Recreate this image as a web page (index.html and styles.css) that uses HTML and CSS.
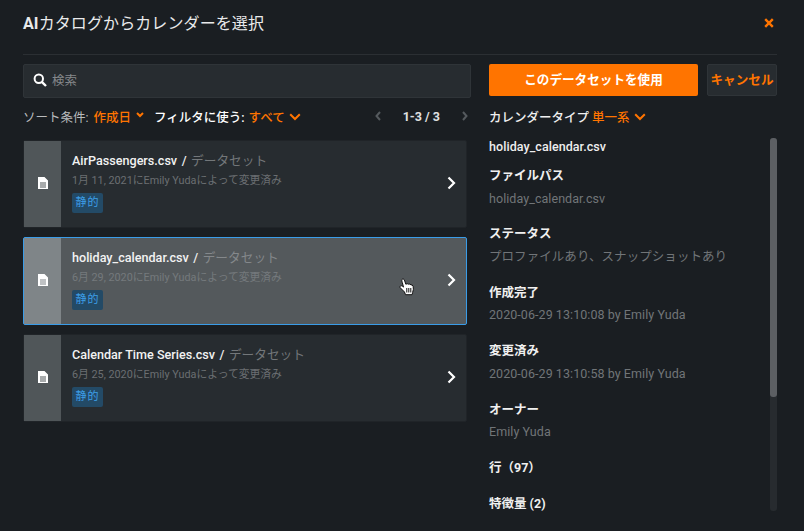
FILE: index.html
```html
<!DOCTYPE html>
<html lang="ja">
<head>
<meta charset="utf-8">
<title>AIカタログからカレンダーを選択</title>
<link rel="stylesheet" href="styles.css">
</head>
<body>
<div class="modal">
  <header class="head">
    <h1 class="title"><b>AI</b>カタログからカレンダーを選択</h1>
    <svg class="close" width="10" height="10" viewBox="0 0 10 10"><path d="M1.2 1.2 8.8 8.8M8.8 1.2 1.2 8.8" stroke="#ff7400" stroke-width="2.4" fill="none"/></svg>
  </header>
  <div class="columns">
    <section class="left">
      <div class="search">
        <svg width="14" height="14" viewBox="0 0 14 14"><circle cx="5.8" cy="5.8" r="4.2" stroke="#fff" stroke-width="2" fill="none"/><path d="M8.8 8.8 13 13" stroke="#fff" stroke-width="2.4" fill="none"/></svg>
        <span class="placeholder">検索</span>
      </div>
      <div class="toolbar">
        <span class="sort-label">ソート条件:</span>
        <span class="accent">作成日</span>
        <svg class="chev-s" width="8" height="6" viewBox="0 0 8 6"><path d="M1 1 4 4 7 1" stroke="#ff7400" stroke-width="2" fill="none"/></svg>
        <span class="filter-label">フィルタに使う:</span>
        <span class="accent">すべて</span>
        <svg class="chev" width="12" height="8" viewBox="0 0 12 8"><path d="M1.2 1.2 6 6 10.8 1.2" stroke="#ff7400" stroke-width="2" fill="none"/></svg>
        <div class="pager">
          <svg width="6" height="10" viewBox="0 0 6 10"><path d="M5 1 1.5 5 5 9" stroke="#555a5e" stroke-width="2" fill="none"/></svg>
          <span class="pages">1-3 / 3</span>
          <svg width="6" height="10" viewBox="0 0 6 10"><path d="M1 1 4.5 5 1 9" stroke="#555a5e" stroke-width="2" fill="none"/></svg>
        </div>
      </div>
      <ul class="cards">
        <li class="card">
          <div class="stripe"><svg class="doc" width="10" height="12" viewBox="0 0 10 12"><path fill-rule="evenodd" d="M0 0h6.500L10 3.500V12H0ZM2 5.500v1h6v-1ZM2 7.500v1h6v-1ZM2 9.500v1h6v-1Z" fill="#fff"/></svg></div>
          <div class="body">
            <div class="name"><b>AirPassengers.csv</b><i>/</i><span>データセット</span></div>
            <div class="meta">1月 11, 2021にEmily Yudaによって変更済み</div>
            <span class="tag">静的</span>
          </div>
          <svg class="arrow" width="9" height="14" viewBox="0 0 9 14"><path d="M1.500 1.500 7 7 1.500 12.500" stroke="#fff" stroke-width="2.200" fill="none"/></svg>
        </li>
        <li class="card active">
          <div class="stripe"><svg class="doc" width="10" height="12" viewBox="0 0 10 12"><path fill-rule="evenodd" d="M0 0h6.500L10 3.500V12H0ZM2 5.500v1h6v-1ZM2 7.500v1h6v-1ZM2 9.500v1h6v-1Z" fill="#fff"/></svg></div>
          <div class="body">
            <div class="name"><b>holiday_calendar.csv</b><i>/</i><span>データセット</span></div>
            <div class="meta">6月 29, 2020にEmily Yudaによって変更済み</div>
            <span class="tag">静的</span>
          </div>
          <svg class="arrow" width="9" height="14" viewBox="0 0 9 14"><path d="M1.500 1.500 7 7 1.500 12.500" stroke="#fff" stroke-width="2.200" fill="none"/></svg>
          <svg class="cursor" width="16" height="18" viewBox="0 0 16 18"><path d="M3 1.500c.700-.900 2-.500 2.400.500l1.400 4.200 1.400-.500 1.300.500 1.300-.100 1.200.800 1.200.100.900 1.300.300 3-.800 3.200-.500 2.200H6.500L5.500 14 1.300 9.800C.700 9 1 8 1.800 7.800c.900-.200 1.700.300 2.700 1.300L3.300 4.500C3 3.300 2.600 2.200 3 1.500Z" fill="#fff" stroke="#111" stroke-width="1"/><path d="M7.800 10v4.500M9.800 10v4.500M11.800 10v4.500" stroke="#111" stroke-width="1" fill="none"/></svg>
        </li>
        <li class="card">
          <div class="stripe"><svg class="doc" width="10" height="12" viewBox="0 0 10 12"><path fill-rule="evenodd" d="M0 0h6.500L10 3.500V12H0ZM2 5.500v1h6v-1ZM2 7.500v1h6v-1ZM2 9.500v1h6v-1Z" fill="#fff"/></svg></div>
          <div class="body">
            <div class="name"><b>Calendar Time Series.csv</b><i>/</i><span>データセット</span></div>
            <div class="meta">6月 25, 2020にEmily Yudaによって変更済み</div>
            <span class="tag">静的</span>
          </div>
          <svg class="arrow" width="9" height="14" viewBox="0 0 9 14"><path d="M1.500 1.500 7 7 1.500 12.500" stroke="#fff" stroke-width="2.200" fill="none"/></svg>
        </li>
      </ul>
    </section>
    <aside class="right">
      <div class="actions">
        <button class="primary">このデータセットを使用</button>
        <button class="cancel">キャンセル</button>
      </div>
      <div class="type">
        <span class="type-label">カレンダータイプ</span>
        <span class="accent">単一系</span>
        <svg class="chev" width="12" height="8" viewBox="0 0 12 8"><path d="M1.200 1.200 6 6 10.800 1.200" stroke="#ff7400" stroke-width="2" fill="none"/></svg>
      </div>
      <div class="scroll-area">
        <div class="details">
          <div class="file">holiday_calendar.csv</div>
          <dl class="list">
            <dt>ファイルパス</dt><dd>holiday_calendar.csv</dd>
            <dt>ステータス</dt><dd>プロファイルあり、スナップショットあり</dd>
            <dt>作成完了</dt><dd>2020-06-29 13:10:08 by Emily Yuda</dd>
            <dt>変更済み</dt><dd>2020-06-29 13:10:58 by Emily Yuda</dd>
            <dt>オーナー</dt><dd>Emily Yuda</dd>
            <dt class="solo">行（97）</dt>
            <dt class="solo">特徴量 (2)</dt>
          </dl>
        </div>
        <div class="scrollbar"><div class="thumb"></div></div>
      </div>
    </aside>
  </div>
</div>
</body>
</html>
```
FILE: styles.css
```css
* { box-sizing: border-box; }
html, body { margin: 0; height: 100%; }
body {
  background: #1a1e22;
  font-family: Roboto, "Noto Sans CJK JP", sans-serif;
  color: #fff;
  overflow: hidden;
}
.modal { width: 804px; height: 531px; padding: 0 27px 0 23px; overflow: hidden; }
.head {
  height: 55px;
  display: flex;
  justify-content: space-between;
  padding-top: 13px;
  border-bottom: 1px solid #2b2f33;
}
.title { margin: 0; font-size: 16px; font-weight: 400; line-height: 22px; color: #e9eaeb; letter-spacing: .1px; }
.title b { font-weight: 700; }
.close { margin: 5px 3px 0 0; }
.columns { display: flex; padding-top: 9px; }
.left { width: 448px; flex: none; }
.right { width: 288px; flex: none; margin-left: 18px; }
.search {
  height: 34px;
  background: #272c30;
  border: 1px solid #2f3438;
  border-radius: 2px;
  display: flex;
  align-items: center;
  gap: 5px;
  padding: 0 0 3px 9px;
}
.placeholder { font-size: 12.500px; color: #85888b; }
.toolbar {
  height: 38px;
  display: flex;
  align-items: center;
  font-size: 12.500px;
  padding-bottom: 2px;
}
.sort-label { color: #b9bbbd; margin-right: 5px; }
.accent { color: #ff7400; font-weight: 500; }
.chev-s { margin: 0 0 2px 5px; }
.filter-label { font-weight: 500; margin: 0 4px 0 10px; color: #fff; }
.chev { margin: 2px 0 0 4px; }
.pager { margin-left: auto; display: flex; align-items: center; gap: 22px; margin-right: 3px; }
.pages { font-weight: 700; font-size: 12.500px; color: #e0e1e2; }
.cards { list-style: none; margin: 4px 4px 0 0; padding: 0; display: flex; flex-direction: column; gap: 9px; }
.card {
  position: relative;
  height: 88px;
  display: flex;
  align-items: center;
  background: #272c30;
  border: 1px solid #202428;
  border-radius: 2px;
}
.card.active { background: #54595c; border-color: #3a9ce8; }
.stripe {
  width: 37px;
  align-self: stretch;
  background: #505659;
  display: flex;
  align-items: center;
  justify-content: center;
  flex: none;
}
.doc { margin-bottom: 2px; }
.active .stripe { background: #7f8588; }
.body { padding: 11px 0 0 11px; flex: 1; align-self: flex-start; }
.name { font-size: 12.600px; line-height: 18px; display: flex; align-items: center; }
.name b { font-weight: 500; color: #f2f2f2; }
.name i { font-style: normal; font-weight: 500; margin: 0 4.500px; color: #eee; }
.name span { font-size: 12.700px; color: #73777a; }
.meta { font-size: 10.800px; line-height: 14px; color: #6b6f72; margin-top: 4px; }
.active .meta { color: #757a7d; }
.active .name span { color: #84888b; }
.tag {
  display: block;
  margin-top: 5px;
  width: 31px;
  height: 20px;
  line-height: 19px;
  text-align: center;
  font-size: 11px;
  letter-spacing: 1px;
  background: #234a66;
  color: #3d9fe8;
  border-radius: 2px;
}
.arrow { margin: 0 10px 2px 0; flex: none; }
.cursor { position: absolute; left: 375px; top: 40px; }
.actions { display: flex; gap: 9px; }
button { font-family: inherit; font-size: 12.600px; font-weight: 700; border-radius: 2px; padding: 0 0 3px; height: 32px; }
.primary { width: 209px; background: #ff7400; border: 0; color: #fff; }
.cancel { width: 70px; background: #272c30; border: 1px solid #2f3438; color: #ff7400; }
.type { height: 42px; display: flex; align-items: center; font-size: 12.500px; padding-bottom: 2px; }
.type-label { font-weight: 500; color: #f0f0f0; margin-right: 3px; }
.scroll-area { display: flex; justify-content: space-between; height: 373px; }
.details { padding-top: 1px; }
.file { font-size: 12.500px; font-weight: 500; line-height: 16px; color: #eee; letter-spacing: .06px; }
.list { margin: 13px 0 0; }
dt { font-size: 12.500px; font-weight: 700; line-height: 16px; color: #f0f0f0; }
dd { margin: 6.700px 0 19.700px; font-size: 12.500px; line-height: 16px; color: #717578; letter-spacing: .06px; }
dt.solo { margin-bottom: 20px; }
.scrollbar { width: 7px; height: 373px; background: #272b2f; border-radius: 3px; }
.thumb { height: 259px; background: #5c5f63; border-radius: 3px; }
```
